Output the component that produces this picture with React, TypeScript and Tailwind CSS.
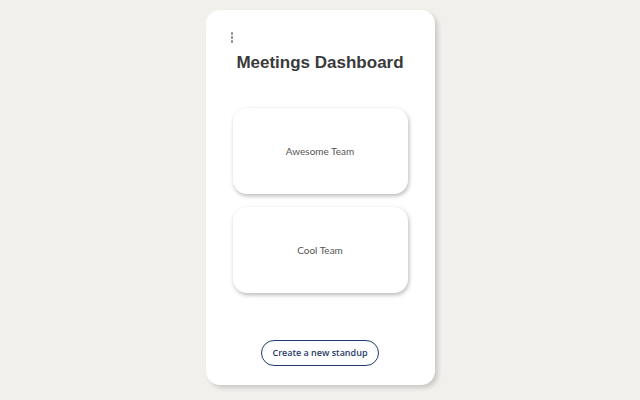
import React from "react";

export default function App() {
  return (
    <div className="w-[640px] h-[400px] bg-[#f1f0ed] flex justify-center">
      <div className="relative mt-[10px] w-[229px] h-[375px] bg-white rounded-[14px] shadow-[3px_3px_4px_rgba(0,0,0,0.16)] flex flex-col items-center">
        <div className="absolute left-[25px] top-[22px] flex flex-col gap-[1.5px]">
          <span className="block w-[2.5px] h-[2.5px] rounded-full bg-[#888]" />
          <span className="block w-[2.5px] h-[2.5px] rounded-full bg-[#888]" />
          <span className="block w-[2.5px] h-[2.5px] rounded-full bg-[#888]" />
        </div>
        <h1 className="mt-[42px] text-[17px] leading-[22px] font-bold text-[#3a3a3a] font-['Liberation_Sans',Arial,sans-serif]">
          Meetings Dashboard
        </h1>
        <div className="mt-[34px] flex flex-col gap-[13px]">
          <div className="w-[175px] h-[86px] rounded-[14px] bg-white shadow-[1px_2px_4px_rgba(0,0,0,0.28)] flex items-center justify-center text-[10px] text-[#555] font-['Lato',sans-serif]">
            Awesome Team
          </div>
          <div className="w-[175px] h-[86px] rounded-[14px] bg-white shadow-[1px_2px_4px_rgba(0,0,0,0.28)] flex items-center justify-center text-[10px] text-[#555] font-['Lato',sans-serif]">
            Cool Team
          </div>
        </div>
        <button className="mt-[47px] w-[118px] h-[26px] rounded-full border-[1.5px] border-[#1f3d6b] bg-white text-[#1f3d6b] text-[9px] font-semibold font-['Open_Sans',sans-serif] flex items-center justify-center">
          Create a new standup
        </button>
      </div>
    </div>
  );
}
